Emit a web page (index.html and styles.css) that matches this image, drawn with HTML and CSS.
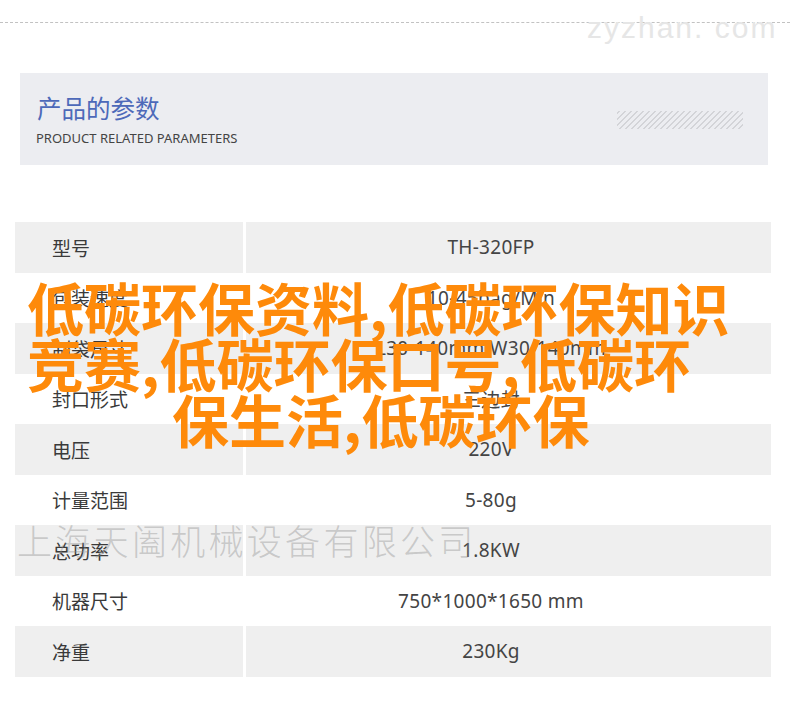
FILE: index.html
```html
<!DOCTYPE html>
<html lang="zh-CN">

<head>
    <meta charset="UTF-8">
    <meta name="viewport" content="width=device-width, initial-scale=1.0">
    <title>产品的参数</title>
    <link rel="stylesheet" href="styles.css">
</head>

<body>
    <div class="page">
        <div class="rule"></div>
        <span class="site-mark">zyzhan. com</span>

        <div class="heading">
            <div class="heading-text">
                <h2>产品的参数</h2>
                <p>PRODUCT RELATED PARAMETERS</p>
            </div>
            <div class="hatch"></div>
        </div>

        <div class="params">
            <div class="row shaded"><div class="label">型号</div><div class="value">TH-320FP</div></div>
            <div class="row"><div class="label">包装速度</div><div class="value">10-45bag/Min</div></div>
            <div class="row shaded"><div class="label">制袋尺寸</div><div class="value">L30-140mm W30-140mm</div></div>
            <div class="row"><div class="label">封口形式</div><div class="value">三边封</div></div>
            <div class="row shaded"><div class="label">电压</div><div class="value">220V</div></div>
            <div class="row"><div class="label">计量范围</div><div class="value">5-80g</div></div>
            <div class="row shaded"><div class="label">总功率</div><div class="value">1.8KW</div></div>
            <div class="row"><div class="label">机器尺寸</div><div class="value">750*1000*1650 mm</div></div>
            <div class="row shaded"><div class="label">净重</div><div class="value">230Kg</div></div>
        </div>

        <!-- overlays sitting on top of the table -->
        <div class="company-mark">上海天阖机械设备有限公司</div>
        <div class="banner">
            <span class="line">低碳环保资料,低碳环保知识</span>
            <span class="line">竞赛,低碳环保口号,低碳环</span>
            <span class="line line-last">保生活,低碳环保</span>
        </div>
    </div>
</body>

</html>
```

FILE: styles.css
```css
body {
    margin: 0;
    background-color: white;
    font-family: "Noto Sans", "Noto Sans CJK SC", sans-serif;
    color: #333;
}

.page {
    position: relative;
    width: 790px;
    height: 715px;
    overflow: hidden;
    padding-top: 22px;
    box-sizing: border-box;
}

.rule {
    border-top: 1px dashed #c2c2c2;
}

.site-mark {
    position: absolute;
    top: 13px;
    left: 587px;
    font-family: "Liberation Sans", Arial, sans-serif;
    font-size: 30px;
    line-height: 30px;
    letter-spacing: 2px;
    color: #e6e6e6;
}

/* header block */
.heading {
    display: flex;
    justify-content: space-between;
    align-items: center;
    margin: 50px 22px 0 20px;
    height: 92px;
    padding: 0 25px 0 17px;
    background-color: #ecedf1;
}

.heading h2 {
    margin: 0;
    font-family: "Noto Sans CJK SC", sans-serif;
    font-size: 24.5px;
    line-height: 32px;
    font-weight: 400;
    color: #4d69b9;
}

.heading p {
    margin: 6px 0 0 -1px;
    font-size: 13px;
    line-height: 16px;
    color: #444;
}

.hatch {
    width: 126px;
    height: 18px;
    margin-top: 1px;
    background: repeating-linear-gradient(-45deg, #ecedf1 0, #ecedf1 2.8px, #d3d4d8 2.8px, #d3d4d8 4.2px);
}

/* parameter table */
.params {
    margin: 57px 19px 0 15px;
}

.row {
    display: grid;
    grid-template-columns: 228px 1fr;
    column-gap: 3px;
    height: 50.5px;
}

.row.shaded .label,
.row.shaded .value {
    background-color: #efefef;
}

.label {
    display: flex;
    align-items: center;
    padding-left: 37px;
    font-family: "Noto Sans CJK SC", sans-serif;
    font-size: 19px;
    color: #3a3a3a;
}

.value {
    display: flex;
    align-items: center;
    justify-content: center;
    padding-right: 35px;
    font-size: 19px;
    letter-spacing: 0.3px;
    color: #444;
}

.company-mark {
    position: absolute;
    top: 516px;
    left: 17px;
    font-family: "Noto Sans CJK SC", sans-serif;
    font-weight: 300;
    font-size: 35px;
    line-height: 48px;
    letter-spacing: 3.3px;
    color: rgba(140, 140, 140, 0.4);
    white-space: nowrap;
}

.banner {
    position: absolute;
    top: 278px;
    left: 27px;
    display: flex;
    flex-direction: column;
    font-family: "Noto Sans CJK SC", sans-serif;
    font-weight: 700;
    font-size: 57px;
    line-height: 56px;
    color: #fe8a0a;
    white-space: nowrap;
}

.line-last {
    margin-left: 145px;
}
```
